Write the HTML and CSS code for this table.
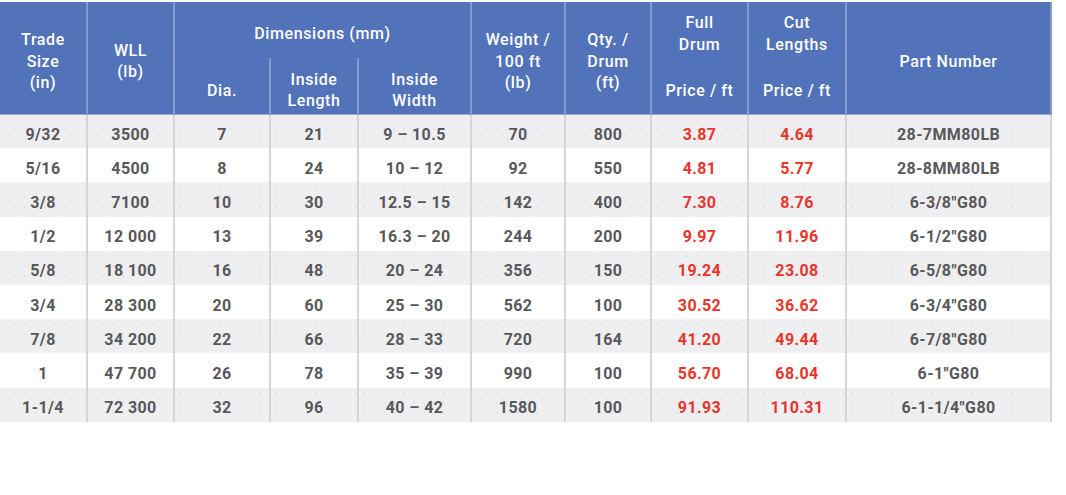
FILE: index.html
```html
<!DOCTYPE html>
<html>
<head>
<meta charset="utf-8">
<link rel="stylesheet" href="styles.css">
</head>
<body>
<table class="spec">
  <colgroup>
    <col class="c1"><col class="c2"><col class="c3"><col class="c4"><col class="c5">
    <col class="c6"><col class="c7"><col class="c8"><col class="c9"><col class="c10">
  </colgroup>
  <thead>
    <tr class="h1">
      <th rowspan="2" class="span">Trade<br>Size<br>(in)</th>
      <th rowspan="2" class="span">WLL<br>(lb)</th>
      <th colspan="3" class="dim">Dimensions (mm)</th>
      <th rowspan="2" class="span">Weight /<br>100 ft<br>(lb)</th>
      <th rowspan="2" class="span">Qty. /<br>Drum<br>(ft)</th>
      <th class="top white-l">Full<br>Drum</th>
      <th class="top">Cut<br>Lengths</th>
      <th rowspan="2" class="span">Part Number</th>
    </tr>
    <tr class="h2">
      <th class="low">Dia.</th>
      <th class="low">Inside<br>Length</th>
      <th class="low">Inside<br>Width</th>
      <th class="low white-l">Price / ft</th>
      <th class="low">Price / ft</th>
    </tr>
  </thead>
  <tbody>
    <tr class="odd"><td>9/32</td><td>3500</td><td>7</td><td>21</td><td>9 – 10.5</td><td>70</td><td>800</td><td class="red">3.87</td><td class="red">4.64</td><td>28-7MM80LB</td></tr>
    <tr><td>5/16</td><td>4500</td><td>8</td><td>24</td><td>10 – 12</td><td>92</td><td>550</td><td class="red">4.81</td><td class="red">5.77</td><td>28-8MM80LB</td></tr>
    <tr class="odd"><td>3/8</td><td>7100</td><td>10</td><td>30</td><td>12.5 – 15</td><td>142</td><td>400</td><td class="red">7.30</td><td class="red">8.76</td><td>6-3/8"G80</td></tr>
    <tr><td>1/2</td><td>12 000</td><td>13</td><td>39</td><td>16.3 – 20</td><td>244</td><td>200</td><td class="red">9.97</td><td class="red">11.96</td><td>6-1/2"G80</td></tr>
    <tr class="odd"><td>5/8</td><td>18 100</td><td>16</td><td>48</td><td>20 – 24</td><td>356</td><td>150</td><td class="red">19.24</td><td class="red">23.08</td><td>6-5/8"G80</td></tr>
    <tr><td>3/4</td><td>28 300</td><td>20</td><td>60</td><td>25 – 30</td><td>562</td><td>100</td><td class="red">30.52</td><td class="red">36.62</td><td>6-3/4"G80</td></tr>
    <tr class="odd"><td>7/8</td><td>34 200</td><td>22</td><td>66</td><td>28 – 33</td><td>720</td><td>164</td><td class="red">41.20</td><td class="red">49.44</td><td>6-7/8"G80</td></tr>
    <tr><td>1</td><td>47 700</td><td>26</td><td>78</td><td>35 – 39</td><td>990</td><td>100</td><td class="red">56.70</td><td class="red">68.04</td><td>6-1"G80</td></tr>
    <tr class="odd"><td>1-1/4</td><td>72 300</td><td>32</td><td>96</td><td>40 – 42</td><td>1580</td><td>100</td><td class="red">91.93</td><td class="red">110.31</td><td>6-1-1/4"G80</td></tr>
  </tbody>
</table>
</body>
</html>
```
FILE: styles.css
```css
html, body {
  margin: 0;
  padding: 0;
  background: #ffffff;
}
body {
  padding-top: 2px;
  font-family: Roboto, "Liberation Sans", sans-serif;
}
.spec {
  border-collapse: collapse;
  table-layout: fixed;
  width: 1051px;
}
.c1 { width: 87px; }
.c2 { width: 87px; }
.c3 { width: 96px; }
.c4 { width: 88px; }
.c5 { width: 113px; }
.c6 { width: 94px; }
.c7 { width: 86px; }
.c8 { width: 97px; }
.c9 { width: 98px; }
.c10 { width: 205px; }

.spec .h1 { height: 56px; }
.spec .h2 { height: 56px; }

.spec th {
  background: #5272b9;
  color: #ffffff;
  font-weight: 500;
  font-size: 16px;
  line-height: 21.5px;
  letter-spacing: 0.6px;
  text-align: center;
  vertical-align: middle;
  padding: 0;
  border-left: 2px solid #8699cf;
  border-right: 2px solid #8699cf;
  border-bottom: 1px solid #9aabd9;
}
.spec th:first-child { border-left: none; }
.spec th.span { padding-top: 7px; }
.spec th.dim { padding-top: 8px; border-bottom: none; }
.spec th.top { vertical-align: top; padding-top: 10px; border-bottom: none; }
.spec th.low { padding-top: 9px; }
.spec th.white-l { border-left: 2px solid #ffffff; }

.spec tbody tr { height: 34.2px; }
.spec td {
  padding: 6px 0 0;
  text-align: center;
  vertical-align: middle;
  font-size: 16px;
  font-weight: 700;
  letter-spacing: 0.4px;
  color: #58585a;
  border-left: 2px solid #d6d6da;
  border-right: 2px solid #d6d6da;
}
.spec td:first-child { border-left: none; }
.spec tr.odd td {
  background-color: #efeff1;
  background-image: radial-gradient(circle, #e0e0e4 0.6px, transparent 1px);
  background-size: 10px 10px;
}
.spec td.red { color: #e8352c; }
```
